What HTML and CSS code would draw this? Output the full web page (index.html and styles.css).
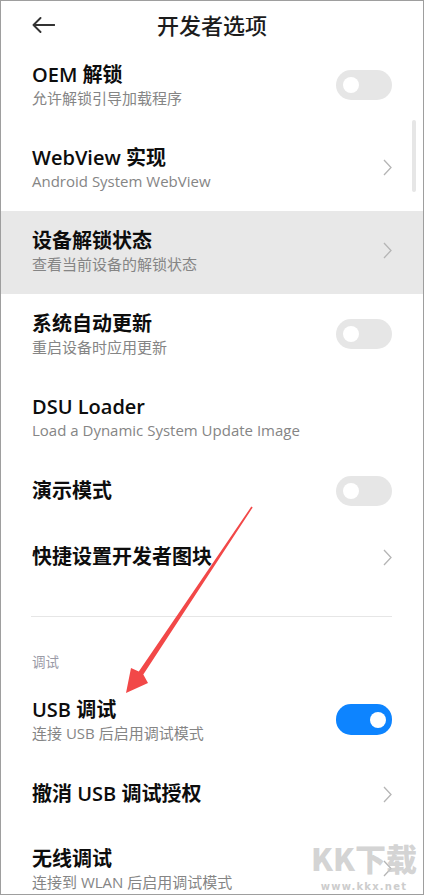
FILE: index.html
```html
<!DOCTYPE html>
<html lang="zh-CN">
<head>
<meta charset="utf-8">
<title>开发者选项</title>
<link rel="stylesheet" href="styles.css">
</head>
<body>
<div class="screen">
  <header class="topbar">
    <div class="topbar-left">
      <svg class="back" width="23" height="16" viewBox="0 0 23 16" aria-hidden="true">
        <path d="M1.5 8 H22.5 M8.5 1 L1.5 8 L8.5 15" fill="none" stroke="#333" stroke-width="1.9" stroke-linecap="round" stroke-linejoin="round"/>
      </svg>
    </div>
    <h1 class="title">开发者选项</h1>
    <div></div>
  </header>

  <div class="list">
    <div class="row two">
      <div class="text"><div class="t">OEM 解锁</div><div class="s">允许解锁引导加载程序</div></div>
      <span class="switch"><span class="knob"></span></span>
    </div>
    <div class="row two">
      <div class="text"><div class="t">WebView 实现</div><div class="s">Android System WebView</div></div>
      <svg class="chev" width="9" height="17" viewBox="0 0 9 17"><path d="M1 1 L8 8.5 L1 16" fill="none" stroke="#b5b5b5" stroke-width="1.3"/></svg>
    </div>
    <div class="row two pressed">
      <div class="text"><div class="t">设备解锁状态</div><div class="s">查看当前设备的解锁状态</div></div>
      <svg class="chev" width="9" height="17" viewBox="0 0 9 17"><path d="M1 1 L8 8.5 L1 16" fill="none" stroke="#b5b5b5" stroke-width="1.3"/></svg>
    </div>
    <div class="row two">
      <div class="text"><div class="t">系统自动更新</div><div class="s">重启设备时应用更新</div></div>
      <span class="switch"><span class="knob"></span></span>
    </div>
    <div class="row two">
      <div class="text"><div class="t">DSU Loader</div><div class="s">Load a Dynamic System Update Image</div></div>
    </div>
    <div class="row one">
      <div class="text"><div class="t">演示模式</div></div>
      <span class="switch"><span class="knob"></span></span>
    </div>
    <div class="row one">
      <div class="text"><div class="t">快捷设置开发者图块</div></div>
      <svg class="chev" width="9" height="17" viewBox="0 0 9 17"><path d="M1 1 L8 8.5 L1 16" fill="none" stroke="#b5b5b5" stroke-width="1.3"/></svg>
    </div>
  </div>

  <div class="divider"></div>
  <div class="section-label">调试</div>

  <div class="list">
    <div class="row two">
      <div class="text"><div class="t">USB 调试</div><div class="s">连接 USB 后启用调试模式</div></div>
      <span class="switch on"><span class="knob"></span></span>
    </div>
    <div class="row one">
      <div class="text"><div class="t">撤消 USB 调试授权</div></div>
      <svg class="chev" width="9" height="17" viewBox="0 0 9 17"><path d="M1 1 L8 8.5 L1 16" fill="none" stroke="#b5b5b5" stroke-width="1.3"/></svg>
    </div>
    <div class="row two">
      <div class="text"><div class="t">无线调试</div><div class="s">连接到 WLAN 后启用调试模式</div></div>
      <svg class="chev" width="9" height="17" viewBox="0 0 9 17"><path d="M1 1 L8 8.5 L1 16" fill="none" stroke="#b5b5b5" stroke-width="1.3"/></svg>
    </div>
  </div>

  <div class="scrollbar"></div>

  <svg class="annotation" width="424" height="895" viewBox="0 0 424 895" aria-hidden="true">
    <polygon points="251.3,506.6 252.7,507.4 143.3,674.6 148,683 126,693 131,668 138.8,671.4" fill="#f24848"/>
  </svg>

  <div class="watermark">
    <div class="wm-big">KK下载</div>
    <div class="wm-url">www.kkx.net</div>
  </div>
</div>
</body>
</html>
```

FILE: styles.css
```css
* { box-sizing: border-box; }

html, body {
  margin: 0;
  padding: 0;
  background: #ffffff;
}

body {
  font-family: "Open Sans", "Noto Sans CJK SC", sans-serif;
  color: #000;
}

.screen {
  position: relative;
  width: 424px;
  height: 895px;
  border: 1px solid #9e9e9e;
  overflow: hidden;
  background: #fff;
}

.topbar {
  display: grid;
  grid-template-columns: 1fr auto 1fr;
  align-items: center;
  height: 44px;
  padding-top: 3px;
}

.topbar-left {
  display: flex;
  align-items: center;
  padding-left: 31px;
}

.back { display: block; }

.title {
  margin: 0;
  font-size: 22px;
  font-weight: 500;
  color: #1c1c1c;
  line-height: 30px;
  letter-spacing: 0;
}

.list {
  display: flex;
  flex-direction: column;
}

.row {
  display: flex;
  align-items: center;
  justify-content: space-between;
  padding-left: 31px;
  padding-right: 31px;
}

.row.two {
  height: 83px;
  padding-top: 18px;
  padding-bottom: 19px;
}

.row.one {
  height: 66px;
  padding-top: 19px;
  padding-bottom: 23px;
}

.row.pressed {
  background: #e8e8e8;
}

.text {
  display: flex;
  flex-direction: column;
}

.t {
  font-size: 20px;
  line-height: 24px;
  font-weight: 600;
  color: #0d0d0d;
  white-space: nowrap;
}

.s {
  font-size: 15px;
  line-height: 22px;
  color: #858585;
  white-space: nowrap;
}

.two .switch,
.two .chev {
  margin-bottom: 3px;
}

.switch {
  display: flex;
  align-items: center;
  width: 56px;
  height: 30px;
  border-radius: 15px;
  background: #e6e6e6;
  padding: 0 7px;
  flex-shrink: 0;
}

.switch .knob {
  width: 16px;
  height: 16px;
  border-radius: 50%;
  background: #fff;
}

.switch.on {
  background: #0d84ff;
  justify-content: flex-end;
  padding: 0 6px;
  height: 31px;
}

.chev {
  display: block;
  margin-right: 0;
  flex-shrink: 0;
}

.divider {
  height: 1px;
  background: #e6e6e6;
  margin: 24px 31px 0 30px;
}

.section-label {
  margin-top: 35px;
  padding-left: 31px;
  font-size: 13.5px;
  line-height: 20px;
  height: 20px;
  color: #9a9aa6;
  margin-bottom: 8px;
}

.scrollbar {
  position: absolute;
  left: 411px;
  top: 119px;
  width: 4px;
  height: 72px;
  border-radius: 2px;
  background: #e6e6e6;
}

.annotation {
  position: absolute;
  left: -1px;
  top: -1px;
  pointer-events: none;
}

.watermark {
  position: absolute;
  left: 304px;
  top: 834px;
  width: 118px;
  text-align: center;
  pointer-events: none;
}

.wm-big {
  font-family: "Noto Sans CJK SC", sans-serif;
  font-size: 31px;
  font-weight: 900;
  line-height: 46px;
  height: 46px;
  color: rgba(200, 200, 200, 0.8);
  letter-spacing: 0;
}

.wm-url {
  font-family: "DejaVu Sans", sans-serif;
  font-size: 10px;
  font-weight: 700;
  line-height: 12px;
  color: #cdcdcd;
  letter-spacing: 1.2px;
}
```
